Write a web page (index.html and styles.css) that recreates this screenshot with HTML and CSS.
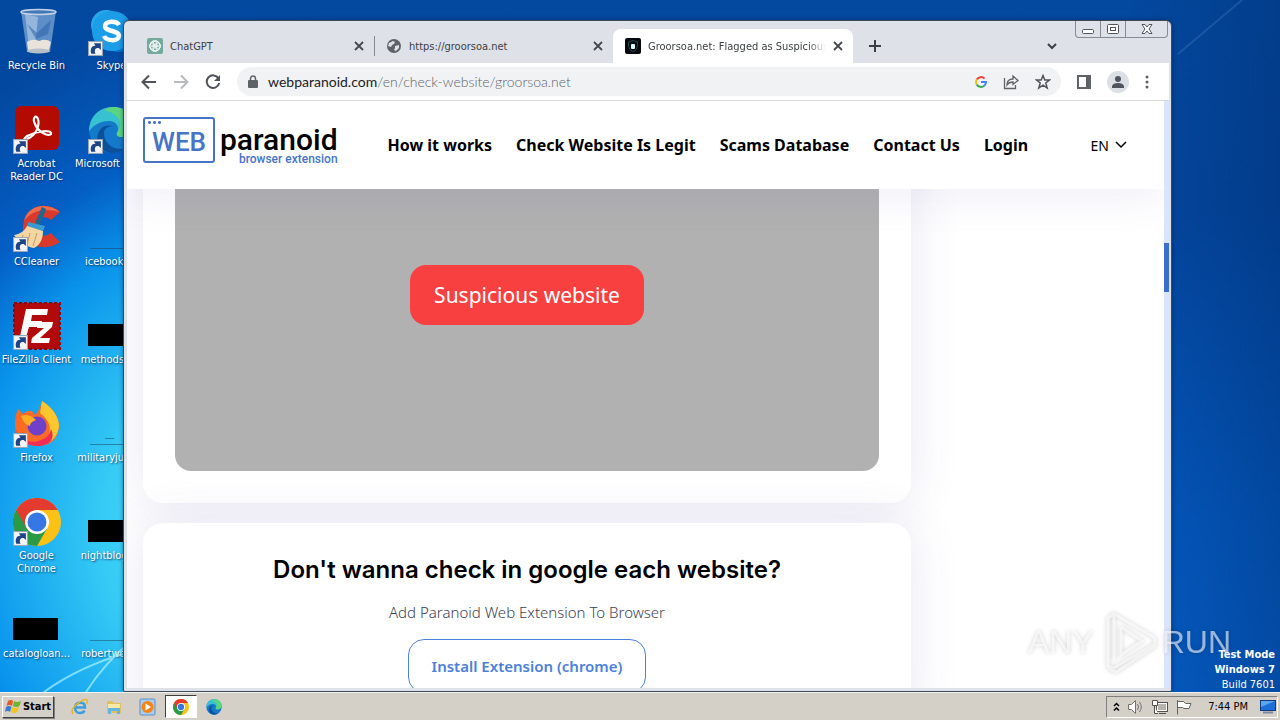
FILE: index.html
```html
<!DOCTYPE html>
<html lang="en">
<head>
    <meta charset="UTF-8">
    <meta name="viewport" content="width=device-width, initial-scale=1.0">
    <title>Desktop</title>
    <link rel="stylesheet" href="styles.css">
</head>
<body>

    <!-- shared shapes -->
    <svg class="defs" aria-hidden="true">
        <symbol id="shortcut" viewBox="0 0 14 14">
            <rect width="14" height="14" fill="#f4f4f4"/>
            <rect x="0.5" y="0.5" width="13" height="13" fill="none" stroke="#9aa5b5"/>
            <path d="M3 12C1.500 7 4 4 7 4.500L5.500 2H12V8.500L10 6.500C7 6 5.500 8 7 12Z" fill="#1c4587"/>
        </symbol>
        <symbol id="chrome" viewBox="0 0 48 48">
            <circle cx="24" cy="24" r="24" fill="#fbc116"/>
            <path d="M24 24L3.200 12A24 24 0 0 0 24 48L34.400 30Z" fill="#2a9a47"/>
            <path d="M3.200 12A24 24 0 0 1 44.800 12H24L13.600 30Z" fill="#e33b2e"/>
            <circle cx="24" cy="24" r="12" fill="#fff"/>
            <circle cx="24" cy="24" r="9.500" fill="#3578e5"/>
        </symbol>
        <symbol id="edge" viewBox="0 0 48 48">
            <circle cx="24" cy="24" r="23" fill="#1479c9"/>
            <path d="M1 26C1 10 12 1 25 1C39 1 47 11 47 20C47 28 40 31 34 31C30 31 28 29 29 27C32 22 29 15 21 15C11 15 3 21 1 26Z" fill="#38c1d0"/>
            <path d="M25 1C39 1 47 11 47 20C47 28 40 31 34 31C30 31 28 29 29 27C36 18 32 8 16 4C19 2 22 1 25 1Z" fill="#5bd680"/>
            <path d="M16 27C16 37 24 44 36 43C32 46 28 47 24 47C13 46 7 37 10 28C12 21 18 18 24 20C18 21 16 24 16 27Z" fill="#0c4f9b"/>
        </symbol>
        <symbol id="close" viewBox="0 0 10 10">
            <path d="M1 1L9 9M9 1L1 9" stroke="#45494e" stroke-width="1.800"/>
        </symbol>
    </svg>

    <main class="desktop">
        <svg class="rays" viewBox="0 0 130 60" aria-hidden="true">
            <path d="M44 60Q80 34 130 20M86 60Q104 32 130 10" fill="none" stroke="#a8f3ff" stroke-width="2" opacity="0.700"/>
        </svg>
        <svg class="beam" viewBox="0 0 110 60" aria-hidden="true">
            <path d="M8 54L72 0" stroke="#4c86c0" stroke-width="2" opacity="0.300"/>
        </svg>

        <div class="icons">
            <a class="icon" href="#">
                <svg viewBox="0 0 48 48">
                    <path d="M8 3H43L37 44H14Z" fill="#8fb3dc" opacity="0.650"/>
                    <path d="M12 6L25 9L22 40H16Z" fill="#d6e6f7" opacity="0.450"/>
                    <path d="M14 16L24 25L38 12L35 26L23 31Z" fill="#2f62aa" opacity="0.550"/>
                    <path d="M14 34Q20 30 26 33Q33 30 38 34L36 42H15Z" fill="#e9e3dc"/>
                    <ellipse cx="25.500" cy="43" rx="11.500" ry="2.500" fill="#b9bfc7"/>
                    <ellipse cx="25.500" cy="4" rx="17.500" ry="2.500" fill="#4578b8" stroke="#c5d4e5" stroke-width="1.500"/>
                </svg>
                <span>Recycle Bin</span>
            </a>
            <a class="icon" href="#">
                <svg viewBox="0 0 48 48">
                    <rect x="2" width="44" height="44" rx="6" fill="#b30b00"/>
                    <path d="M14 33C23 30 27 19 25 13C23 8 19 12 22 18C25 26 35 31 38 28C39 23 24 25 14 30C8 35 12 37 16 31" fill="none" stroke="#fff" stroke-width="2.200"/>
                    <use href="#shortcut" y="33" width="15" height="15"/>
                </svg>
                <span>Acrobat<br>Reader DC</span>
            </a>
            <a class="icon" href="#">
                <svg viewBox="0 0 48 48">
                    <path d="M47 8C35-3 12 0 10 22C9 42 32 49 47 38L38 29C30 35 23 30 23 22C24 13 32 11 38 16Z" fill="#d8392b"/>
                    <path d="M47 8C35-2 15 0 11 17C20 5 33 4 47 8Z" fill="#f16a4a"/>
                    <path d="M29 3L33 5L27 21L22 19Z" fill="#21668f"/>
                    <path d="M15 18L32 22L30 27L14 23Z" fill="#3b9ad0"/>
                    <path d="M14 22L30 27C30 35 27 41 21 44C14 43 6 38 1 31C8 30 12 26 14 22Z" fill="#f3d6a3"/>
                    <path d="M10 31L8 37M17 29L14 41M24 29L20 42" stroke="#c99a5c"/>
                    <use href="#shortcut" y="33" width="15" height="15"/>
                </svg>
                <span>CCleaner</span>
            </a>
            <a class="icon" href="#">
                <svg viewBox="0 0 48 48">
                    <rect x="1" y="1" width="46" height="46" fill="#b20a0a" stroke="#8c0808" stroke-width="2" stroke-dasharray="3 2"/>
                    <path d="M13 7H35L34 13H19L18 19H29L28 25H16L12 39H6Z" fill="#fff"/>
                    <path d="M25 20H40L39 25L27 36H37L36 41H18L19 36L31 26H24Z" fill="#fff"/>
                    <use href="#shortcut" y="33" width="15" height="15"/>
                </svg>
                <span>FileZilla Client</span>
            </a>
            <a class="icon" href="#">
                <svg viewBox="0 0 48 48">
                    <path d="M5 9L10 14Q14 10 19 11L22 15Q27 10 29 1Q46 12 46 27Q44 46 24 46Q3 45 2 25Q2 15 5 9Z" fill="#fb6b25"/>
                    <path d="M29 1Q46 12 46 27Q44 40 33 43Q43 25 27 13Z" fill="#ffc72e"/>
                    <path d="M3 30Q10 45 25 41Q37 38 38 29Q44 42 28 46Q7 47 3 30Z" fill="#f12d55"/>
                    <circle cx="24" cy="26" r="9.500" fill="#7040c9"/>
                    <path d="M8 16Q16 13 23 20Q17 22 17 26Q11 25 8 16Z" fill="#ffad22"/>
                    <use href="#shortcut" y="33" width="15" height="15"/>
                </svg>
                <span>Firefox</span>
            </a>
            <a class="icon" href="#">
                <svg viewBox="0 0 48 48">
                    <use href="#chrome" width="48" height="48"/>
                    <use href="#shortcut" y="33" width="15" height="15"/>
                </svg>
                <span>Google<br>Chrome</span>
            </a>
            <a class="icon" href="#">
                <svg viewBox="0 0 48 48"><rect y="22" width="45" height="22"/></svg>
                <span>catalogloan...</span>
            </a>

            <a class="icon" href="#">
                <svg viewBox="0 0 48 48">
                    <rect x="3" y="2" width="30" height="30" rx="15" fill="#28a8ea"/>
                    <rect x="14" y="12" width="32" height="32" rx="16" fill="#0078d4"/>
                    <circle cx="24" cy="23" r="20" fill="#1b9de8"/>
                    <path d="M31 17C29 13 18 12 17 18C17 24 31 22 31 28C30 34 18 33 16 28" fill="none" stroke="#fff" stroke-width="4.500"/>
                    <use href="#shortcut" y="33" width="15" height="15"/>
                </svg>
                <span>Skype</span>
            </a>
            <a class="icon" href="#">
                <svg viewBox="0 0 48 48">
                    <use href="#edge" width="48" height="48"/>
                    <use href="#shortcut" y="33" width="15" height="15"/>
                </svg>
                <span>Microsoft Edge</span>
            </a>
            <a class="icon" href="#">
                <svg viewBox="0 0 48 48"><path d="M2 44.500H45" stroke="#14639d"/></svg>
                <span>icebook.rtf</span>
            </a>
            <a class="icon" href="#">
                <svg viewBox="0 0 48 48"><rect y="22" width="45" height="22"/></svg>
                <span>methodsla...</span>
            </a>
            <a class="icon" href="#">
                <svg viewBox="0 0 48 48"><path d="M2 44.500H45M17 38.500H26" stroke="#2583a8"/></svg>
                <span>militaryjuly.rtf</span>
            </a>
            <a class="icon" href="#">
                <svg viewBox="0 0 48 48"><rect y="22" width="45" height="22"/></svg>
                <span>nightblog.rtf</span>
            </a>
            <a class="icon" href="#">
                <svg viewBox="0 0 48 48"><path d="M2 44.500H45" stroke="#2583a8"/></svg>
                <span>robertworl...</span>
            </a>
        </div>

        <div class="build">
            <strong>Test Mode</strong>
            <strong>Windows 7</strong>
            <span>Build 7601</span>
        </div>

        <section class="window">
            <div class="window-buttons">
                <button aria-label="Minimize"><svg width="12" height="12"><rect x="0.500" y="6.500" width="11" height="4" rx="1" fill="#fff" stroke="#50565e"/></svg></button>
                <button aria-label="Maximize"><svg width="12" height="12"><rect x="0.500" y="1.500" width="11" height="9" rx="1" fill="#fff" stroke="#50565e"/><rect x="3.500" y="4.500" width="5" height="3" fill="none" stroke="#50565e"/></svg></button>
                <button class="wide" aria-label="Close"><svg width="12" height="12"><path d="M1 1.500H4L6 4L8 1.500H11L8 6L11 10.500H8L6 8L4 10.500H1L4 6Z" fill="#fff" stroke="#50565e"/></svg></button>
            </div>

            <div class="tabs">
                <div class="tab">
                    <svg width="16" height="16" viewBox="0 0 16 16">
                        <rect width="16" height="16" rx="2" fill="#75a99c"/>
                        <g fill="none" stroke="#fff" stroke-width="0.800">
                            <ellipse cx="8" cy="6" rx="4.500" ry="3"/>
                            <ellipse cx="8" cy="6" rx="4.500" ry="3" transform="rotate(60 8 8)"/>
                            <ellipse cx="8" cy="6" rx="4.500" ry="3" transform="rotate(120 8 8)"/>
                            <ellipse cx="8" cy="6" rx="4.500" ry="3" transform="rotate(180 8 8)"/>
                            <ellipse cx="8" cy="6" rx="4.500" ry="3" transform="rotate(240 8 8)"/>
                            <ellipse cx="8" cy="6" rx="4.500" ry="3" transform="rotate(300 8 8)"/>
                        </g>
                    </svg>
                    <span>ChatGPT</span>
                    <button aria-label="Close tab"><svg width="10" height="10"><use href="#close"/></svg></button>
                </div>
                <div class="tab divided">
                    <svg width="16" height="16" viewBox="0 0 16 16">
                        <circle cx="8" cy="8" r="7" fill="#5f6368"/>
                        <path d="M3 5L7 3L9 4L8 6L6 7L5 9L2 8ZM9 8L13 7L13 10L10 13L8 12L9 10Z" fill="#dee1e8"/>
                    </svg>
                    <span>https://groorsoa.net</span>
                    <button aria-label="Close tab"><svg width="10" height="10"><use href="#close"/></svg></button>
                </div>
                <div class="tab active">
                    <svg width="16" height="16" viewBox="0 0 16 16">
                        <rect width="16" height="16" rx="2" fill="#05090d"/>
                        <path d="M8 2.500L12.500 4V8Q12 12 8 14Q4 12 3.500 8V4Z" fill="none" stroke="#1d4a50"/>
                        <rect x="6" y="6" width="4" height="5" rx="1" fill="#dff"/>
                    </svg>
                    <span>Groorsoa.net: Flagged as Suspicious</span>
                    <button aria-label="Close tab"><svg width="10" height="10"><use href="#close"/></svg></button>
                </div>
                <button class="new-tab" aria-label="New tab"><svg width="12" height="12"><path d="M6 0V12M0 6H12" stroke="#3c4043" stroke-width="2"/></svg></button>
                <button class="tab-search" aria-label="Search tabs"><svg width="10" height="8"><path d="M1 2L5 6L9 2" fill="none" stroke="#3c4043" stroke-width="2"/></svg></button>
            </div>

            <div class="toolbar">
                <button aria-label="Back"><svg width="16" height="16"><path d="M15 8H2M8 1.500L1.500 8L8 14.500" fill="none" stroke="#50545a" stroke-width="2"/></svg></button>
                <button aria-label="Forward"><svg width="16" height="16"><path d="M1 8H14M8 1.500L14.500 8L8 14.500" fill="none" stroke="#b8babd" stroke-width="2"/></svg></button>
                <button aria-label="Reload"><svg width="16" height="16"><path d="M13.500 4.500A6.300 6.300 0 1 0 14.200 9" fill="none" stroke="#50545a" stroke-width="2"/><path d="M15 1V7H9Z" fill="#50545a"/></svg></button>
                <div class="address">
                    <svg width="10" height="14" viewBox="0 0 10 14"><rect y="5" width="10" height="8" rx="1" fill="#5f6368"/><path d="M2.500 6V3.500A2.500 2.500 0 0 1 7.500 3.500V6" fill="none" stroke="#5f6368" stroke-width="1.500"/></svg>
                    <div class="url"><b>webparanoid.com</b>/en/check-website/groorsoa.net</div>
                    <button aria-label="Google"><svg width="12" height="12" viewBox="0 0 12 12" fill="none" stroke-width="2">
                        <path d="M9.500 2.500A5 5 0 0 0 1.700 3.600" stroke="#ea4335"/>
                        <path d="M1.700 3.600A5 5 0 0 0 1.700 8.400" stroke="#fbbc05"/>
                        <path d="M1.700 8.400A5 5 0 0 0 9.300 9.700" stroke="#34a853"/>
                        <path d="M9.300 9.700A5 5 0 0 0 11 6H6" stroke="#4285f4"/>
                    </svg></button>
                    <button aria-label="Share"><svg width="16" height="16" viewBox="0 0 16 16" fill="none" stroke="#5f6368" stroke-width="1.300"><path d="M1.500 4V14.500H12.500V11M4 11Q4 5 10 5V2L15 6.500L10 10.500V8Q6 8 4 11Z"/></svg></button>
                    <button aria-label="Bookmark"><svg width="16" height="16" viewBox="0 0 16 16" fill="none" stroke="#50545a" stroke-width="1.500"><path d="M8 1.500L9.800 6H14.500L10.800 9L12.200 14L8 11.200L3.800 14L5.200 9L1.500 6H6.200Z"/></svg></button>
                </div>
                <button aria-label="Side panel"><svg width="14" height="14"><path d="M1 1H13V13H1Z" fill="#fff" stroke="#5f6368" stroke-width="2"/><rect x="9" width="5" height="14" fill="#5f6368"/></svg></button>
                <button class="profile" aria-label="Profile"><svg width="14" height="14"><circle cx="7" cy="4" r="3" fill="#50545f"/><path d="M1 13V11Q2 8 7 8Q12 8 13 11V13Z" fill="#50545f"/></svg></button>
                <button aria-label="Menu"><svg width="4" height="14" fill="#5f6368"><circle cx="2" cy="2" r="1.500"/><circle cx="2" cy="7" r="1.500"/><circle cx="2" cy="12" r="1.500"/></svg></button>
            </div>

            <div class="viewport">
                <div class="page">
                    <header class="header">
                        <a class="logo" href="#">
                            <span class="logo-web">WEB</span>
                            <span class="logo-text">
                                <span class="logo-name">paranoid</span>
                                <span class="logo-sub">browser extension</span>
                            </span>
                        </a>
                        <nav class="nav">
                            <a href="#">How it works</a>
                            <a href="#">Check Website Is Legit</a>
                            <a href="#">Scams Database</a>
                            <a href="#">Contact Us</a>
                            <a href="#">Login</a>
                        </nav>
                        <button class="lang">EN <svg width="12" height="8"><path d="M1 1L6 6L11 1" fill="none" stroke="#000" stroke-width="1.500"/></svg></button>
                    </header>
                    <div class="content">
                        <article class="card">
                            <div class="preview"><span class="verdict">Suspicious website</span></div>
                        </article>
                        <article class="card promo">
                            <h2>Don't wanna check in google each website?</h2>
                            <p>Add Paranoid Web Extension To Browser</p>
                            <a class="install" href="#">Install Extension (chrome)</a>
                        </article>
                    </div>
                </div>
                <div class="scrollbar"><div class="thumb"></div></div>
            </div>
        </section>

        <div class="watermark">
            <span>ANY</span>
            <svg width="60" height="64" viewBox="0 0 60 64" fill="none" stroke="currentColor" stroke-width="3">
                <path d="M16 50V4L57 28M16 4L10 8V50M23 17V45L44 31L23 17M57 34L16 58L10 56V50M57 28V36L18 62L10 58"/>
            </svg>
            <span>RUN</span>
        </div>
    </main>

    <footer class="taskbar">
        <button class="start">
            <svg width="17" height="16" viewBox="0 0 17 16">
                <path d="M3 2Q6 0 8 2L7 7Q4 5 1.500 7Z" fill="#e8562a"/>
                <path d="M9 2Q12 4 16 2L14.500 7Q11 9 8 7Z" fill="#6fb52c"/>
                <path d="M1 8Q4 6 6.500 8L5 13Q3 11 0 13Z" fill="#3b7ad0"/>
                <path d="M7.500 8Q11 10 14 8L12.500 13Q9 15 6 13Z" fill="#f7c21e"/>
            </svg>
            Start
        </button>
        <div class="launch">
            <button aria-label="Internet Explorer"><svg width="18" height="18" viewBox="0 0 18 18" fill="none">
                <path d="M4 9.500H14Q14 4.500 9 4.500Q4 5 4 10Q4.500 15 9 15Q12.500 15 13.500 12.500" stroke="#3a9fe0" stroke-width="2.500"/>
                <path d="M2 16Q-1 12 6 6Q13 0 16 2Q17.500 3 15 6" stroke="#e9b528" stroke-width="1.500"/>
            </svg></button>
            <button aria-label="Explorer"><svg width="18" height="18" viewBox="0 0 18 18">
                <path d="M2 3H7L9 5H16V15H2Z" fill="#e5c05a"/>
                <path d="M3 6H15V11H3Z" fill="#fbeaa5"/>
                <path d="M3 16V10H15V16H12V13H6V16Z" fill="#62b5e5"/>
            </svg></button>
            <button aria-label="Media Player"><svg width="18" height="18" viewBox="0 0 18 18">
                <rect x="1" y="1" width="15" height="16" rx="1" fill="#a8cdf0" stroke="#5c8fc5"/>
                <circle cx="8.500" cy="9" r="6" fill="#f58412"/>
                <path d="M6.500 5.500L12 9L6.500 12.500Z" fill="#fff"/>
            </svg></button>
            <button class="pressed" aria-label="Chrome"><svg width="16" height="16"><use href="#chrome"/></svg></button>
            <button aria-label="Edge"><svg width="16" height="16"><use href="#edge"/></svg></button>
        </div>
        <div class="tray">
            <svg width="7" height="10" fill="none" stroke="#000" stroke-width="1.500"><path d="M1 4L3.500 1.500L6 4M1 8.500L3.500 6L6 8.500"/></svg>
            <svg width="16" height="16" fill="#fff" stroke="#77736d"><path d="M0.500 5.500H3.500L7.500 1.500V14.500L3.500 10.500H0.500Z"/><path d="M9.500 5Q11.500 8 9.500 11M11.500 3Q15 8 11.500 13" fill="none"/></svg>
            <svg width="16" height="16" fill="#fff" stroke="#55524d"><rect x="4.500" y="3.500" width="11" height="9"/><rect x="6" y="5" width="8" height="6" fill="#b5b2ac" stroke="none"/><path d="M7 14.500H14M2.500 7V14.500H6M0.500 1.500H5.500V6.500H0.500Z"/></svg>
            <svg width="16" height="16" fill="#fff" stroke="#66625c"><path d="M1.500 1V15.500M1.500 2.500H7.500L9.500 4.500H15L13 9.500H8L6.500 8.500H1.500"/></svg>
            <time>7:44 PM</time>
            <svg width="16" height="14"><rect x="0.500" y="0.500" width="15" height="10" fill="#1c6fd6" stroke="#123a80"/><path d="M1 1H15L1 7Z" fill="#5ea5ef"/><path d="M3 12.500H13" stroke="#7c8aa0" stroke-width="2"/></svg>
        </div>
    </footer>

</body>
</html>
```
FILE: styles.css
```css
* {
    box-sizing: border-box;
}

body {
    margin: 0;
    height: 100vh;
    display: flex;
    flex-direction: column;
    overflow: hidden;
    font-family: "DejaVu Sans Condensed", "DejaVu Sans", sans-serif;
    font-size: 11px;
}

button {
    font: inherit;
    color: inherit;
    background: none;
    border: none;
    padding: 0;
    display: flex;
    align-items: center;
    justify-content: center;
}

a {
    color: inherit;
    text-decoration: none;
}

.defs {
    position: absolute;
    width: 0;
    height: 0;
}

/* desktop */
.desktop {
    flex: 1;
    position: relative;
    overflow: hidden;
    background:
        radial-gradient(ellipse 480px 520px at 260px 530px, #62e6fa 0%, #35cbf5 33%, rgba(10, 155, 242, 0.9) 60%, rgba(4, 110, 220, 0.6) 75%, rgba(0, 80, 190, 0) 100%),
        linear-gradient(to right, rgba(0, 0, 0, 0) 88%, rgba(0, 25, 70, 0.25) 100%),
        linear-gradient(to bottom, #0349a0 0%, #0347a0 30%, #0358be 75%, #055cc4 100%);
}

.rays {
    position: absolute;
    left: 0;
    bottom: 0;
    width: 130px;
}

.beam {
    position: absolute;
    right: 0;
    top: 0;
    width: 110px;
}

.icons {
    display: grid;
    grid-auto-flow: column;
    grid-template-rows: repeat(7, 98px);
    grid-auto-columns: 75px;
    width: max-content;
    padding-top: 8px;
}

.icon {
    display: flex;
    flex-direction: column;
    align-items: center;
    gap: 3px;
    width: 73px;
    color: #fff;
    line-height: 13px;
    text-align: center;
    white-space: nowrap;
    text-shadow: 1px 1px 2px rgba(0, 30, 80, 0.8);
}

.icon svg {
    width: 48px;
    height: 48px;
}

.build {
    position: absolute;
    right: 5px;
    bottom: 0;
    display: flex;
    flex-direction: column;
    text-align: right;
    line-height: 15px;
    color: #fff;
}

/* browser window */
.window {
    position: absolute;
    left: 123px;
    right: 108px;
    top: 20px;
    bottom: 0;
    display: flex;
    flex-direction: column;
    padding: 0 2px 3px 3px;
    background: #dee1e8;
    border: 1px solid #3f4a59;
    border-radius: 6px 6px 2px 2px;
    box-shadow: 0 0 4px rgba(0, 20, 60, 0.5);
}

.window-buttons {
    position: absolute;
    top: 0;
    right: 3px;
    display: flex;
    height: 17px;
    border: 1px solid #858b94;
    border-top: none;
    border-radius: 0 0 4px 4px;
}

.window-buttons button {
    width: 25px;
    border-right: 1px solid #858b94;
}

.window-buttons .wide {
    width: 41px;
    border-right: none;
}

.tabs {
    display: flex;
    height: 42px;
    padding: 8px 0 0 8px;
    color: #3c4043;
}

.tab {
    display: flex;
    align-items: center;
    gap: 7px;
    width: 239px;
    padding: 0 10px 0 12px;
    position: relative;
}

.tab span {
    flex: 1;
    overflow: hidden;
    white-space: nowrap;
}

.tab.divided::before {
    content: "";
    position: absolute;
    left: 0;
    width: 1px;
    height: 20px;
    background: #85888d;
}

.tab.active {
    width: 240px;
    background: #fff;
    border-radius: 8px 8px 0 0;
}

.tab.active span {
    -webkit-mask-image: linear-gradient(to right, #000 90%, transparent);
    mask-image: linear-gradient(to right, #000 90%, transparent);
}

.new-tab {
    margin-left: 16px;
}

.tab-search {
    margin-left: auto;
    margin-right: 112px;
}

.toolbar {
    display: flex;
    align-items: center;
    gap: 16px;
    height: 38px;
    padding: 0 20px 0 14px;
    background: #fff;
    border-bottom: 1px solid #d5d7da;
}

.address {
    flex: 1;
    display: flex;
    align-items: center;
    gap: 16px;
    height: 29px;
    padding: 0 10px 0 11px;
    border-radius: 15px;
    background: #f0f2f4;
}

.url {
    flex: 1;
    margin-left: -6px;
    font-family: Lato, sans-serif;
    font-size: 14px;
    font-weight: 300;
    color: #5f6368;
}

.url b {
    font-weight: 400;
    color: #202124;
}

.profile {
    width: 22px;
    height: 22px;
    border-radius: 50%;
    background: #dcdfe4;
}

.viewport {
    flex: 1;
    min-height: 0;
    display: flex;
}

.scrollbar {
    width: 5px;
    background: #d9e5fb;
}

.thumb {
    height: 49px;
    margin-top: 142px;
    background: #3c6fcd;
}

/* web page, scrolled part of the way down */
.page {
    flex: 1;
    overflow: hidden;
    background: #fff;
    font-family: "Noto Sans", sans-serif;
    color: #000;
}

.header {
    position: relative;
    z-index: 1;
    display: flex;
    align-items: center;
    height: 88px;
    padding: 0 37px 0 16px;
    background: #fff;
    box-shadow: 0 10px 40px rgba(80, 80, 160, 0.08);
}

.logo {
    display: flex;
    gap: 5px;
    margin-top: -8px;
    font-family: Roboto, sans-serif;
}

.logo-web {
    display: flex;
    align-items: flex-end;
    justify-content: center;
    width: 72px;
    height: 46px;
    border: 2px solid #4674c8;
    border-radius: 3px;
    background: radial-gradient(circle, #4674c8 1px, transparent 2px) 2px 1px / 5px 5px no-repeat,
        radial-gradient(circle, #4674c8 1px, transparent 2px) 7px 1px / 5px 5px no-repeat,
        radial-gradient(circle, #4674c8 1px, transparent 2px) 12px 1px / 5px 5px no-repeat;
    color: #4674c8;
    font-size: 26px;
    font-weight: 500;
    line-height: 38px;
}

.logo-text {
    display: flex;
    flex-direction: column;
    align-items: flex-end;
}

.logo-name {
    padding-top: 10px;
    font-size: 30px;
    font-weight: 500;
    line-height: 26px;
}

.logo-sub {
    font-size: 12px;
    font-weight: 500;
    line-height: 12px;
    color: #4674c8;
}

.nav {
    display: flex;
    gap: 24px;
    margin-left: 50px;
    font-size: 16px;
    font-weight: 700;
    white-space: nowrap;
}

.lang {
    gap: 6px;
    margin-left: auto;
    font-size: 14px;
}

.content {
    display: flex;
    flex-direction: column;
    gap: 20px;
    max-width: 800px;
    margin-top: -102px;
    padding: 0 16px;
}

.card {
    padding: 32px;
    border-radius: 20px;
    background: #fff;
    box-shadow: 0 0 50px rgba(70, 60, 150, 0.12);
}

.preview {
    display: flex;
    align-items: center;
    justify-content: center;
    height: 352px;
    border-radius: 16px;
    background: #b1b1b1;
}

.verdict {
    padding: 15px 24px;
    border-radius: 16px;
    background: #f94041;
    color: #fff;
    font-size: 21px;
    line-height: 30px;
}

.promo {
    display: flex;
    flex-direction: column;
    align-items: center;
    position: relative;
}

.promo h2 {
    margin: 0;
    font-family: Inter, sans-serif;
    font-size: 24px;
    font-weight: 600;
    line-height: 30px;
}

.promo p {
    margin: 16px 0;
    font-size: 15px;
    font-weight: 300;
    line-height: 22px;
    color: #3c4254;
}

.install {
    padding: 16px 23px;
    border: 1px solid #4b80dc;
    border-radius: 16px;
    font-size: 15px;
    font-weight: 600;
    line-height: 20px;
    color: #4b80dc;
}

/* recorder logo over the corner */
.watermark {
    position: absolute;
    right: 49px;
    bottom: 18px;
    display: flex;
    align-items: center;
    gap: 4px;
    color: rgba(255, 255, 255, 0.6);
    font-family: "Liberation Sans", sans-serif;
    font-size: 32px;
    filter: drop-shadow(0 0 2px rgba(0, 0, 0, 0.3));
}

/* taskbar */
.taskbar {
    display: flex;
    align-items: center;
    height: 28px;
    padding: 0 2px;
    background: #d4d0c8;
    border-top: 1px solid #f4f2ee;
}

.start {
    gap: 1px;
    height: 22px;
    width: 52px;
    border: 1px solid;
    border-color: #fff #404040 #404040 #fff;
    box-shadow: 1px 1px 0 #808080;
    font-weight: 700;
}

.launch {
    display: flex;
    margin-left: 9px;
}

.launch button {
    width: 34px;
    height: 23px;
}

.launch .pressed {
    width: 32px;
    background: #fff;
    border: 1px solid;
    border-color: #404040 #fff #fff #404040;
}

.tray {
    display: flex;
    align-items: center;
    gap: 8px;
    height: 22px;
    margin-left: auto;
    padding: 0 1px 0 6px;
    border: 1px solid;
    border-color: #808080 #fff #fff #808080;
}

.tray time {
    margin: 0 4px 0 8px;
}
```
